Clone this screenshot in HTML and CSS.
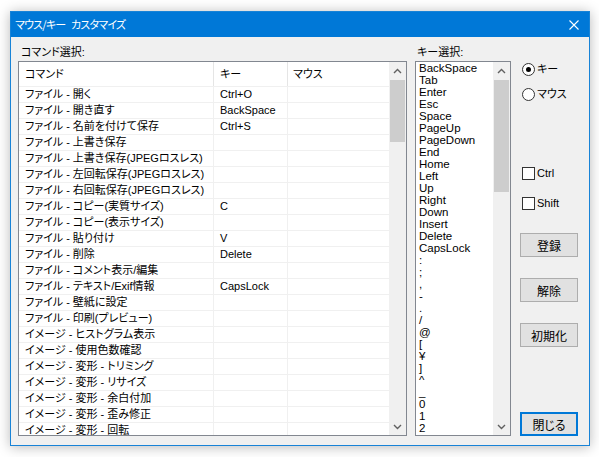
FILE: index.html
```html
<!DOCTYPE html>
<html lang="ja">
<head>
<meta charset="utf-8">
<title>マウス/キー カスタマイズ</title>
<link rel="stylesheet" href="styles.css">
</head>
<body>
<div class="window">
  <div class="titlebar">
    <span class="title">マウス/キー カスタマイズ</span>
    <svg class="close" width="10" height="10" viewBox="0 0 10 10"><path d="M0.5 0.5 L9.5 9.5 M9.5 0.5 L0.5 9.5" stroke="#fff" stroke-width="1.1" fill="none"/></svg>
  </div>
  <div class="content">
    <div class="cmd-col">
      <div class="label">コマンド選択:</div>
      <div class="listview">
        <div class="lv-main">
          <div class="lv-header">
            <div class="hc">コマンド</div>
            <div class="hc">キー</div>
            <div class="hc last">マウス</div>
          </div>
          <div class="lv-rows">
            <div class="row"><div class="c1">ファイル - 開く</div><div class="c2">Ctrl+O</div><div class="c3"></div></div>
            <div class="row"><div class="c1">ファイル - 開き直す</div><div class="c2">BackSpace</div><div class="c3"></div></div>
            <div class="row"><div class="c1">ファイル - 名前を付けて保存</div><div class="c2">Ctrl+S</div><div class="c3"></div></div>
            <div class="row"><div class="c1">ファイル - 上書き保存</div><div class="c2"></div><div class="c3"></div></div>
            <div class="row"><div class="c1">ファイル - 上書き保存(JPEGロスレス)</div><div class="c2"></div><div class="c3"></div></div>
            <div class="row"><div class="c1">ファイル - 左回転保存(JPEGロスレス)</div><div class="c2"></div><div class="c3"></div></div>
            <div class="row"><div class="c1">ファイル - 右回転保存(JPEGロスレス)</div><div class="c2"></div><div class="c3"></div></div>
            <div class="row"><div class="c1">ファイル - コピー(実質サイズ)</div><div class="c2">C</div><div class="c3"></div></div>
            <div class="row"><div class="c1">ファイル - コピー(表示サイズ)</div><div class="c2"></div><div class="c3"></div></div>
            <div class="row"><div class="c1">ファイル - 貼り付け</div><div class="c2">V</div><div class="c3"></div></div>
            <div class="row"><div class="c1">ファイル - 削除</div><div class="c2">Delete</div><div class="c3"></div></div>
            <div class="row"><div class="c1">ファイル - コメント表示/編集</div><div class="c2"></div><div class="c3"></div></div>
            <div class="row"><div class="c1">ファイル - テキスト/Exif情報</div><div class="c2">CapsLock</div><div class="c3"></div></div>
            <div class="row"><div class="c1">ファイル - 壁紙に設定</div><div class="c2"></div><div class="c3"></div></div>
            <div class="row"><div class="c1">ファイル - 印刷(プレビュー)</div><div class="c2"></div><div class="c3"></div></div>
            <div class="row"><div class="c1">イメージ - ヒストグラム表示</div><div class="c2"></div><div class="c3"></div></div>
            <div class="row"><div class="c1">イメージ - 使用色数確認</div><div class="c2"></div><div class="c3"></div></div>
            <div class="row"><div class="c1">イメージ - 変形 - トリミング</div><div class="c2"></div><div class="c3"></div></div>
            <div class="row"><div class="c1">イメージ - 変形 - リサイズ</div><div class="c2"></div><div class="c3"></div></div>
            <div class="row"><div class="c1">イメージ - 変形 - 余白付加</div><div class="c2"></div><div class="c3"></div></div>
            <div class="row"><div class="c1">イメージ - 変形 - 歪み修正</div><div class="c2"></div><div class="c3"></div></div>
            <div class="row"><div class="c1">イメージ - 変形 - 回転</div><div class="c2"></div><div class="c3"></div></div>
          </div>
        </div>
        <div class="vscroll main-scroll">
          <div class="sbtn"><svg width="9" height="6" viewBox="0 0 9 6"><path d="M1 5 L4.5 1.5 L8 5" stroke="#606060" stroke-width="1.4" fill="none"/></svg></div>
          <div class="track"><div class="thumb"></div></div>
          <div class="sbtn"><svg width="9" height="6" viewBox="0 0 9 6"><path d="M1 1 L4.5 4.5 L8 1" stroke="#606060" stroke-width="1.4" fill="none"/></svg></div>
        </div>
      </div>
    </div>
    <div class="key-col">
      <div class="label">キー選択:</div>
      <div class="listbox">
        <div class="lb-items">
          <div class="it">BackSpace</div>
          <div class="it">Tab</div>
          <div class="it">Enter</div>
          <div class="it">Esc</div>
          <div class="it">Space</div>
          <div class="it">PageUp</div>
          <div class="it">PageDown</div>
          <div class="it">End</div>
          <div class="it">Home</div>
          <div class="it">Left</div>
          <div class="it">Up</div>
          <div class="it">Right</div>
          <div class="it">Down</div>
          <div class="it">Insert</div>
          <div class="it">Delete</div>
          <div class="it">CapsLock</div>
          <div class="it">:</div>
          <div class="it">;</div>
          <div class="it">,</div>
          <div class="it">-</div>
          <div class="it">.</div>
          <div class="it">/</div>
          <div class="it">@</div>
          <div class="it">[</div>
          <div class="it">¥</div>
          <div class="it">]</div>
          <div class="it">^</div>
          <div class="it">_</div>
          <div class="it">0</div>
          <div class="it">1</div>
          <div class="it">2</div>
        </div>
        <div class="vscroll key-scroll">
          <div class="sbtn"><svg width="9" height="6" viewBox="0 0 9 6"><path d="M1 5 L4.5 1.5 L8 5" stroke="#606060" stroke-width="1.4" fill="none"/></svg></div>
          <div class="track"><div class="thumb"></div></div>
          <div class="sbtn"><svg width="9" height="6" viewBox="0 0 9 6"><path d="M1 1 L4.5 4.5 L8 1" stroke="#606060" stroke-width="1.4" fill="none"/></svg></div>
        </div>
      </div>
    </div>
    <div class="side">
      <div class="opt r1"><span class="radio checked"></span><span class="otext">キー</span></div>
      <div class="opt r2"><span class="radio"></span><span class="otext">マウス</span></div>
      <div class="opt k1"><span class="check"></span><span class="otext">Ctrl</span></div>
      <div class="opt k2"><span class="check"></span><span class="otext">Shift</span></div>
      <div class="btn b1">登録</div>
      <div class="btn b2">解除</div>
      <div class="btn b3">初期化</div>
      <div class="btn b4 default">閉じる</div>
    </div>
  </div>
</div>
</body>
</html>
```
FILE: styles.css
```css
html, body {
  margin: 0;
  padding: 0;
}
body {
  background: #ffffff;
  width: 599px;
  height: 457px;
  overflow: hidden;
  font-family: "Liberation Sans", "Noto Sans CJK JP", sans-serif;
  font-feature-settings: "palt";
  color: #000;
}
.window {
  margin: 11px 0 0 10px;
  width: 580px;
  height: 435px;
  box-sizing: border-box;
  border: 1px solid #1883d7;
  box-shadow: 0 1px 12px rgba(0, 0, 0, 0.28);
  display: flex;
  flex-direction: column;
}
.titlebar {
  height: 25px;
  flex: none;
  background: #0078d7;
  color: #fff;
  display: flex;
  align-items: center;
  justify-content: space-between;
  padding: 0 10px 0 4px;
}
.title {
  font-family: "Noto Sans CJK JP", sans-serif;
  font-size: 11px;
  letter-spacing: -0.8px;
  word-spacing: 4px;
  line-height: 25px;
  white-space: pre;
}
.close {
  display: block;
  margin-top: 1px;
}
.content {
  flex: 1;
  background: #f0f0f0;
  display: flex;
  padding-left: 7px;
}
.label {
  font-size: 11px;
  line-height: 17px;
  height: 17px;
  margin-top: 7px;
  padding-left: 3px;
  white-space: nowrap;
}
.cmd-col {
  width: 389px;
  flex: none;
}
.listview {
  height: 375px;
  box-sizing: border-box;
  border: 1px solid #828790;
  background: #fff;
  display: flex;
  overflow: hidden;
}
.lv-main {
  width: 370px;
  flex: none;
  overflow: hidden;
}
.lv-header {
  display: grid;
  grid-template-columns: 195px 74px 101px;
  height: 24px;
}
.hc {
  font-size: 11px;
  line-height: 24px;
  padding-left: 6px;
  border-right: 1px solid #e5e5e5;
  box-sizing: border-box;
  white-space: nowrap;
}
.hc.last {
  border-right: none;
  padding-left: 5px;
}
.row {
  display: grid;
  grid-template-columns: 195px 74px 101px;
  height: 16px;
  box-sizing: border-box;
  border-top: 1px solid #f0f0f0;
}
.row > div {
  font-size: 11px;
  line-height: 15px;
  padding-left: 6px;
  box-sizing: border-box;
  white-space: nowrap;
  overflow: hidden;
}
.row .c1, .row .c2 {
  border-right: 1px solid #f0f0f0;
}
.vscroll {
  width: 17px;
  flex: none;
  background: #f0f0f0;
  display: flex;
  flex-direction: column;
}
.sbtn {
  height: 17px;
  flex: none;
  display: flex;
  align-items: center;
  justify-content: center;
}
.track {
  flex: 1;
}
.thumb {
  margin: 1px 1px 0 1px;
  background: #cdcdcd;
}
.main-scroll .thumb {
  height: 62px;
}
.key-scroll .thumb {
  height: 112px;
}
.key-col {
  width: 96px;
  flex: none;
  margin-left: 8px;
}
.key-col .label {
  padding-left: 2px;
}
.listbox {
  height: 375px;
  box-sizing: border-box;
  border: 1px solid #828790;
  background: #fff;
  display: flex;
  overflow: hidden;
}
.lb-items {
  flex: 1;
  overflow: hidden;
  padding-left: 3px;
}
.it {
  font-family: "Liberation Sans", sans-serif;
  font-size: 11.5px;
  line-height: 12px;
  height: 12px;
  white-space: nowrap;
}
.side {
  width: 58px;
  flex: none;
  margin-left: 9px;
  display: flex;
  flex-direction: column;
}
.opt {
  display: flex;
  align-items: center;
  height: 13px;
  padding-left: 2px;
  font-size: 11px;
}
.otext {
  margin-left: 2px;
  line-height: 13px;
}
.r1 { margin-top: 26px; }
.r2 { margin-top: 12px; }
.k1 { margin-top: 66px; }
.k2 { margin-top: 17px; }
.radio {
  width: 13px;
  height: 13px;
  box-sizing: border-box;
  border: 1px solid #333;
  border-radius: 50%;
  background: #fff;
  position: relative;
  flex: none;
}
.radio.checked::after {
  content: "";
  position: absolute;
  left: 3px;
  top: 3px;
  width: 5px;
  height: 5px;
  border-radius: 50%;
  background: #000;
}
.check {
  width: 13px;
  height: 13px;
  box-sizing: border-box;
  border: 1px solid #333;
  background: #fff;
  flex: none;
}
.btn {
  height: 24px;
  box-sizing: border-box;
  border: 1px solid #adadad;
  background: #e1e1e1;
  font-size: 12px;
  display: flex;
  align-items: center;
  justify-content: center;
}
.btn.default {
  border: 2px solid #0078d7;
}
.b1 { margin-top: 23px; }
.b2 { margin-top: 21px; }
.b3 { margin-top: 21px; }
.b4 { margin-top: 65px; }
```
